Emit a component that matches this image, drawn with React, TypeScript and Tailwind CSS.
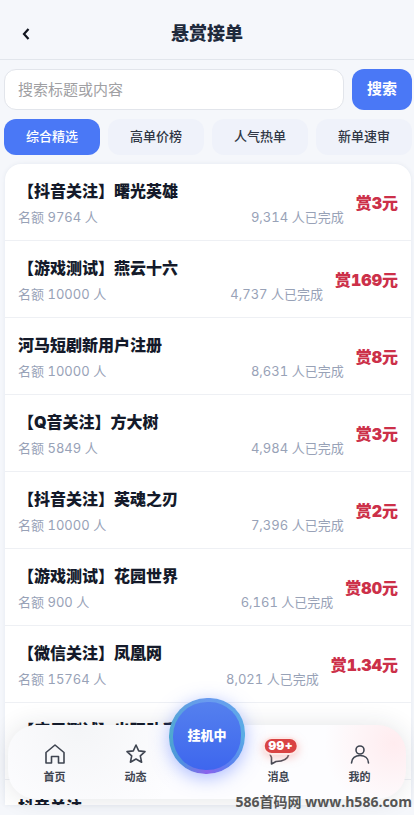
import type { ReactNode } from "react";

type Task = { title: string; quota: string; done: string; price: string };

const tasks: Task[] = [
  { title: "【抖音关注】曙光英雄", quota: "9764", done: "9,314", price: "3" },
  { title: "【游戏测试】燕云十六", quota: "10000", done: "4,737", price: "169" },
  { title: "河马短剧新用户注册", quota: "10000", done: "8,631", price: "8" },
  { title: "【Q音关注】方大树", quota: "5849", done: "4,984", price: "3" },
  { title: "【抖音关注】英魂之刃", quota: "10000", done: "7,396", price: "2" },
  { title: "【游戏测试】花园世界", quota: "900", done: "6,161", price: "80" },
  { title: "【微信关注】凤凰网", quota: "15764", done: "8,021", price: "1.34" },
  { title: "【应用测试】出现助手", quota: "10000", done: "5,210", price: "2" },
  { title: "抖音关注", quota: "10000", done: "6,402", price: "1" },
];

const tabs = ["综合精选", "高单价榜", "人气热单", "新单速审"];

function TaskRow({ task }: { task: Task }) {
  return (
    <li className="flex shrink-0 items-center gap-3 border-b border-[#eef0f4] px-[13px] pt-[15px] pb-[13px] tabular-nums">
      <div className="flex min-w-0 flex-1 flex-col gap-1">
        <h2 className="truncate text-base leading-6 font-black text-[#141a2a]">{task.title}</h2>
        <p className="flex justify-between text-[13px] leading-5 text-[#98a2b7]">
          <span>名额 {task.quota} 人</span>
          <span>{task.done} 人已完成</span>
        </p>
      </div>
      <strong className="text-base font-black text-[#cc3049]">赏{task.price}元</strong>
    </li>
  );
}

function NavItem({ label, badge, children }: { label: string; badge?: string; children: ReactNode }) {
  return (
    <button type="button" className="flex flex-1 flex-col items-center gap-1 text-[11px] leading-4 font-bold text-[#3f4551]">
      <span className="relative">
        <svg viewBox="0 0 22 22" className="size-[22px]" fill="none" stroke="currentColor" strokeWidth="1.6" strokeLinejoin="round" strokeLinecap="round" aria-hidden="true">
          {children}
        </svg>
        {badge && (
          <span className="absolute -top-1 left-[13px] -translate-x-1/2 rounded-full bg-[#d94343] px-1 text-xs leading-[14px] font-black text-white shadow-[0_0_0_2px_#fde8e6,0_3px_9px_2px_#f4a09a80]">
            {badge}
          </span>
        )}
      </span>
      {label}
    </button>
  );
}

export default function App() {
  return (
    <div className="relative flex h-screen flex-col overflow-hidden bg-[#f5f7fb] font-['Inter','Noto_Sans_CJK_SC',sans-serif]">
      <header className="grid shrink-0 grid-cols-[52px_1fr_52px] items-center border-b border-[#e2e6ec] pt-[10px] pb-px">
        <button type="button" aria-label="返回" className="flex h-12 items-center justify-center text-[#11151f]">
          <svg viewBox="0 0 8 12" className="h-3 w-2" fill="none" stroke="currentColor" strokeWidth="2.2" aria-hidden="true">
            <path d="M6.500 1 2 6l4.500 5" />
          </svg>
        </button>
        <h1 className="text-center text-lg font-black text-[#202a3c]">悬赏接单</h1>
      </header>

      <main className="flex min-h-0 flex-1 flex-col pt-[9px] pr-0.5 pb-[10px] pl-1">
        <form className="flex shrink-0 gap-2" onSubmit={(e) => e.preventDefault()}>
          <input
            type="search"
            aria-label="搜索标题或内容"
            placeholder="搜索标题或内容"
            className="h-[41px] min-w-0 flex-1 rounded-xl border border-[#e2e5eb] bg-white px-[13px] text-[15px] text-[#202a3c] outline-none placeholder:text-[#a0a0a3]"
          />
          <button type="submit" className="w-[60px] rounded-xl bg-[#4a78f6] text-[15px] font-bold text-white">
            搜索
          </button>
        </form>

        <div role="tablist" className="mt-[9px] grid shrink-0 grid-cols-4 gap-2">
          {tabs.map((tab, i) => (
            <button
              key={tab}
              type="button"
              role="tab"
              aria-selected={i === 0}
              className={
                i === 0
                  ? "h-9 rounded-xl bg-[#4a78f6] text-[13px] font-medium text-white"
                  : "h-9 rounded-xl bg-[#eff2fa] text-[13px] font-medium text-[#303745]"
              }
            >
              {tab}
            </button>
          ))}
        </div>

        <ul className="mx-px mt-[9px] flex min-h-0 flex-1 flex-col overflow-hidden rounded-t-2xl bg-white shadow-[0_0_4px_#e4e8f0]">
          {tasks.map((task) => (
            <TaskRow key={task.title} task={task} />
          ))}
        </ul>
      </main>

      <nav className="absolute inset-x-2 bottom-4 flex h-[74px] items-center rounded-[28px] bg-[#fdfdff] bg-[radial-gradient(circle_at_97%_25%,#ffecef,transparent_70px),radial-gradient(circle_at_18%_0%,#f4f5f7,transparent_110px)] px-1.5 pt-1 shadow-[0_0_24px_#1f29371f]">
        <NavItem label="首页">
          <path d="M2 9.500 11 2l9 7.500V20h-5.500v-6.500h-7V20H2Z" />
        </NavItem>
        <NavItem label="动态">
          <path d="m11 2 2.700 5.900 6.300.7-4.700 4.300 1.300 6.300L11 16l-5.600 3.200 1.300-6.300L2 8.600l6.300-.7Z" />
        </NavItem>
        <div className="flex w-[62px] shrink-0 justify-center">
          <button
            type="button"
            className="absolute -top-[27px] size-[76px] rounded-[50%_46%_50%_48%] bg-[conic-gradient(#6a9af0,#58aee4_25%,#5b7ff0_40%,#8a63ec_50%,#4f8fe0_62%,#4fa9cf_75%,#6a9af0)] p-1 text-[13px] font-black text-white shadow-[0_4px_18px_#5b7cff80]"
          >
            <span className="flex size-full items-center justify-center rounded-[50%_46%_50%_48%] bg-linear-to-b from-[#5580ee] to-[#3e66ee]">挂机中</span>
          </button>
        </div>
        <NavItem label="消息" badge="99+">
          <path d="M2 10c0 1.500.5 3 1.500 4.500L3.500 21l4.500-2.500C14 18.500 19.500 17 21 11" />
        </NavItem>
        <NavItem label="我的">
          <circle cx="11" cy="7" r="4" />
          <path d="M2.500 20c0-5 4-7.500 8.500-7.500s8.500 2.500 8.500 7.500" />
        </NavItem>
      </nav>

      <p className="absolute right-0.5 bottom-[3px] font-['Open_Sans','Noto_Sans_CJK_SC',sans-serif] text-sm leading-5 font-bold text-[#555555]">
        586首码网 www.h586.com
      </p>
    </div>
  );
}
